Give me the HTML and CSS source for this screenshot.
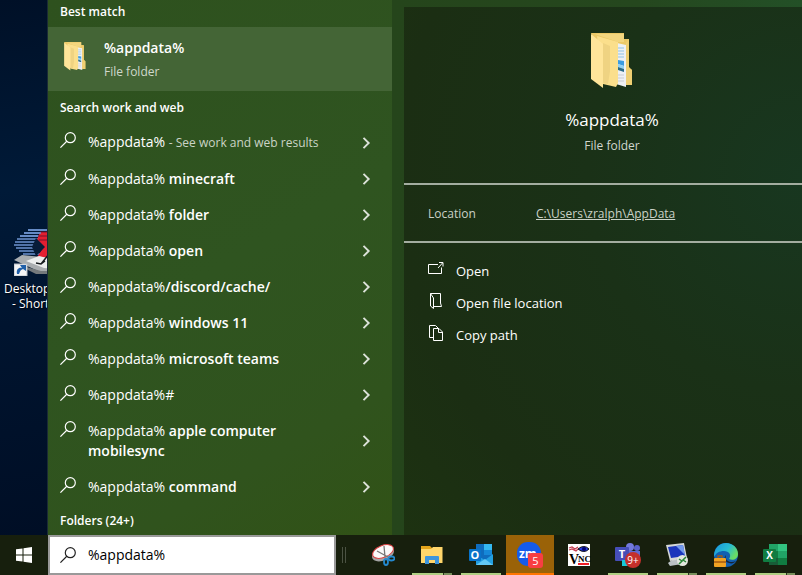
FILE: index.html
```html
<!DOCTYPE html>
<html lang="en">
<head>
    <meta charset="UTF-8">
    <meta name="viewport" content="width=device-width, initial-scale=1.0">
    <title>Windows Search</title>
    <link rel="stylesheet" href="styles.css">
</head>
<body>
    <!-- Shared icons -->
    <svg class="sprite" aria-hidden="true">
        <symbol id="icon-search" viewBox="0 0 16 16">
            <circle cx="10.3" cy="5.7" r="5" fill="none" stroke="currentColor" stroke-width="1.2"/>
            <path d="M6.8 9.3 L.4 15.6" fill="none" stroke="currentColor" stroke-width="1.2"/>
        </symbol>
        <symbol id="icon-chevron" viewBox="0 0 8 12">
            <path d="M1 .8 L6.2 6 L1 11.2" fill="none" stroke="currentColor" stroke-width="1.9"/>
        </symbol>
        <symbol id="icon-folder" viewBox="0 0 42 56">
            <path d="M0 0 H33 V6 H38 V34 L41 37 V52 H34 L12 49 Z" fill="#ecc967"/>
            <path d="M4 1 H33 V9 L27 9 Z" fill="#f3d67f"/>
            <path d="M26 10 L35 12 V54 L25 51 Z" fill="#eef0f3"/>
            <path d="M27 15 H33 M27 18 H33 M27 21 H33 M27 24 H33" stroke="#8fc3e6" stroke-width="1"/>
            <path d="M27 27 L33 28 V33 L27 31 Z" fill="#3b9be0"/>
            <path d="M27 31 L33 33 V36 L27 34 Z" fill="#8fd0f5"/>
            <path d="M27 34 L33 36 V39 L27 37 Z" fill="#286a86"/>
            <path d="M27 42 H33 M27 45 H33 M27 48 H33" stroke="#c9ccd2" stroke-width="1"/>
            <path d="M35 10 L38 6 V35 L41 37 V52 L35 52 Z" fill="#efcf72"/>
            <path d="M6 3 L27 9 V50 L25 54 L12 51 Z" fill="#fbdf8c"/>
            <path d="M12 10 L19 13 V38 L17 51 L12 50 Z" fill="#efd382"/>
            <path d="M0 1 L12 11 V55 L0 46 Z" fill="#ffe59a"/>
        </symbol>
    </svg>

    <div class="screen">
        <main class="workspace">
            <div class="desktop">
                <div class="shortcut">
                    <svg class="shortcut-icon" viewBox="0 0 48 48">
                        <path d="M14 2 H46 M10 5 H34 M6 8 H28 M3 11 H24 M1 14 H22 M0 17 H21 M2 20 H22 M5 23 H25 M9 26 H29" stroke="#6c93cf" stroke-width="1.7"/>
                        <path d="M26 4 H48 V34 H20 L29 20 L23 12 Z" fill="#e21f31"/>
                        <path d="M26 4 H48 M24 8 H48 M25 12 H48" stroke="#79132c"/>
                        <path d="M14 2 H46 M10 5 H27 M6 8 H24" stroke="#6c93cf" stroke-width="1.7"/>
                        <path d="M22 10 L31 19 L22 28 L18 19 Z" fill="#071c39"/>
                        <path d="M0 32 L8 27 L48 31 V46 L24 43 Z" fill="#a9adb0"/>
                        <path d="M12 33 L25 28 L48 34 V41 L30 40 Z" fill="#eceeee"/>
                        <path d="M2 36 L27 43 H48 V46 H22 Z" fill="#74797c"/>
                        <path d="M27 36 L35 26 M22 35 L27 36 L31 33" stroke="#15191d" stroke-width="1.5" fill="none"/>
                        <path d="M0 36 H13 V48 H0 Z" fill="#f4f5f6" stroke="#b8bec5"/>
                        <path d="M3 46 C2 41 5 39 8 40 L6 37 H12 V43 L9 41 C6 42 6 44 5 46 Z" fill="#205fa8"/>
                    </svg>
                    <span>Desktop</span>
                    <span class="second">- Short</span>
                </div>
            </div>

            <section class="results">
                <h2 class="best">Best match</h2>
                <button class="best-match">
                    <svg class="small-folder"><use href="#icon-folder"/></svg>
                    <span class="match-text">
                        <strong>%appdata%</strong>
                        <span>File folder</span>
                    </span>
                </button>
                <h2>Search work and web</h2>
                <div class="suggestions">
                    <button class="suggestion"><svg class="glass"><use href="#icon-search"/></svg><span class="label">%appdata% <small>- See work and web results</small></span><svg class="chevron"><use href="#icon-chevron"/></svg></button>
                    <button class="suggestion"><svg class="glass"><use href="#icon-search"/></svg><span class="label">%appdata% <b>minecraft</b></span><svg class="chevron"><use href="#icon-chevron"/></svg></button>
                    <button class="suggestion"><svg class="glass"><use href="#icon-search"/></svg><span class="label">%appdata% <b>folder</b></span><svg class="chevron"><use href="#icon-chevron"/></svg></button>
                    <button class="suggestion"><svg class="glass"><use href="#icon-search"/></svg><span class="label">%appdata% <b>open</b></span><svg class="chevron"><use href="#icon-chevron"/></svg></button>
                    <button class="suggestion"><svg class="glass"><use href="#icon-search"/></svg><span class="label">%appdata%<b>/discord/cache/</b></span><svg class="chevron"><use href="#icon-chevron"/></svg></button>
                    <button class="suggestion"><svg class="glass"><use href="#icon-search"/></svg><span class="label">%appdata% <b>windows 11</b></span><svg class="chevron"><use href="#icon-chevron"/></svg></button>
                    <button class="suggestion"><svg class="glass"><use href="#icon-search"/></svg><span class="label">%appdata% <b>microsoft teams</b></span><svg class="chevron"><use href="#icon-chevron"/></svg></button>
                    <button class="suggestion"><svg class="glass"><use href="#icon-search"/></svg><span class="label">%appdata%#</span><svg class="chevron"><use href="#icon-chevron"/></svg></button>
                    <button class="suggestion"><svg class="glass"><use href="#icon-search"/></svg><span class="label">%appdata% <b>apple computer mobilesync</b></span><svg class="chevron"><use href="#icon-chevron"/></svg></button>
                    <button class="suggestion"><svg class="glass"><use href="#icon-search"/></svg><span class="label">%appdata% <b>command</b></span><svg class="chevron"><use href="#icon-chevron"/></svg></button>
                </div>
                <h2 class="folders">Folders (24+)</h2>
            </section>

            <section class="preview-wrap">
                <div class="preview">
                    <header class="preview-head">
                        <svg class="large-folder"><use href="#icon-folder"/></svg>
                        <h1>%appdata%</h1>
                        <p>File folder</p>
                    </header>
                    <div class="location">
                        <span>Location</span>
                        <a href="#">C:\Users\zralph\AppData</a>
                    </div>
                    <div class="actions">
                        <button class="action">
                            <svg viewBox="0 0 16 16"><path d="M10 3.500 H.5 V12.500 H13.500 V6.500 M10 7 L14.500 2 M11 1.500 H15 V5.500" fill="none" stroke="currentColor"/></svg>
                            Open
                        </button>
                        <button class="action">
                            <svg viewBox="0 0 16 16"><path d="M2.500 .5 H12.500 V10 L13.500 13.500 H6 M2.500 .5 V13 L5.500 15.500 V5 L2.500 .5" fill="none" stroke="currentColor"/></svg>
                            Open file location
                        </button>
                        <button class="action">
                            <svg viewBox="0 0 16 16"><path d="M5 12.500 H1.500 V.5 H7.500 L10.500 3.500 M5.500 3.500 H11 L14.500 7 V15.500 H5.500 Z M10.500 3.500 V7.500 H14.500" fill="none" stroke="currentColor"/></svg>
                            Copy path
                        </button>
                    </div>
                </div>
            </section>
        </main>

        <footer class="taskbar">
            <button class="start" aria-label="Start">
                <svg viewBox="0 0 16 16"><path d="M0 2.300 L6.500 1.400 V7.500 H0 Z M7.500 1.200 L16 0 V7.500 H7.500 Z M0 8.500 H6.500 V14.600 L0 13.700 Z M7.500 8.500 H16 V16 L7.500 14.800 Z" fill="#fff"/></svg>
            </button>
            <label class="search-box">
                <svg class="glass"><use href="#icon-search"/></svg>
                <input type="text" value="%appdata%" aria-label="Search">
            </label>
            <div class="grip"></div>
            <nav class="apps">
                <button class="app" aria-label="Snipping Tool">
                    <svg viewBox="0 0 24 24">
                        <ellipse cx="12" cy="11" rx="11.500" ry="6.500" transform="rotate(-22 12 11)" fill="#a5a5a5"/>
                        <ellipse cx="12" cy="8.500" rx="11" ry="6" transform="rotate(-22 12 8.500)" fill="#fafafa" stroke="#d84343"/>
                        <path d="M13 3 L14 14 M6 8 L17 14" stroke="#777" stroke-width="1.300"/>
                        <g fill="none" stroke="#2489cf" stroke-width="1.800"><ellipse cx="15" cy="19" rx="2" ry="3"/><ellipse cx="20.500" cy="15.500" rx="3" ry="2"/></g>
                    </svg>
                </button>
                <button class="app open stacked" aria-label="File Explorer">
                    <svg viewBox="0 0 24 24">
                        <path d="M1 3 H10 L12 5 H22 V9 H1 Z" fill="#e4a41b"/>
                        <path d="M1 6 H11 L13 4 H22.500 V20 H1 Z" fill="#ffd66b"/>
                        <path d="M5 21 V14 Q5 13 6 13 H18 Q19 13 19 14 V21 H15 V17 H9 V21 Z" fill="#3d95dc"/>
                    </svg>
                </button>
                <button class="app open" aria-label="Outlook">
                    <svg viewBox="0 0 24 24">
                        <path d="M7 1 H23 V17 H7 Z" fill="#0f6cbd"/><path d="M15 1 H23 V7 H15 Z" fill="#35b8f1"/><path d="M15 7 H23 V12 H15 Z" fill="#1688d8"/>
                        <path d="M7 12 L16 17 L24 11 V22 H7 Z" fill="#239fe0"/><path d="M7 22 L16 16 L24 22 Z" fill="#62c8f4"/>
                        <rect y="6" width="12" height="12" rx="1" fill="#0873ca"/><text x="6" y="16" text-anchor="middle" font-size="11" font-weight="700">O</text>
                    </svg>
                </button>
                <button class="app alert" aria-label="Zoom">
                    <svg viewBox="0 0 26 26">
                        <rect x="0" y="0" width="24" height="24" rx="11" fill="#155bea"/><text x="2" y="16" font-size="12" font-weight="700">zm</text>
                        <rect x="11" y="11" width="15" height="15" rx="3" fill="#f83e42"/><text x="18.500" y="23" text-anchor="middle" font-size="11">5</text>
                    </svg>
                </button>
                <button class="app" aria-label="VNC Viewer">
                    <svg viewBox="0 0 24 24">
                        <rect x="1" y="1" width="22" height="22" fill="#fff"/>
                        <path d="M2 5 L5 4 L8 6 L11 4 M2 7 L5 6 L9 8 L11 6" fill="none" stroke="#c33c4f" stroke-width="1.200"/>
                        <path d="M11 6 Q17 1 22 6 Q17 11 11 6 Z" fill="#263de0" stroke="#090909"/><circle cx="17" cy="6" r="2" fill="#050571"/>
                        <text class="vnc" x="2" y="21" font-size="14" font-weight="700">V</text><text class="vnc" x="11" y="19" font-size="9" font-weight="700">NC</text>
                        <path d="M11 21 H22" stroke="#ef2027" stroke-width="2"/>
                    </svg>
                </button>
                <button class="app open" aria-label="Microsoft Teams">
                    <svg viewBox="0 0 26 26">
                        <circle cx="15" cy="5" r="4" fill="#7278dc"/><circle cx="22" cy="6" r="3" fill="#5961cb"/>
                        <path d="M9 9 H25 V17 Q22 24 15 23 H9 Z" fill="#606bd2"/>
                        <rect x="0" y="5" width="14" height="14" rx="1" fill="#464eb8"/><text x="7" y="16" text-anchor="middle" font-size="11" font-weight="700">T</text>
                        <path d="M7 18 H15 V24 H7 Z" fill="#16cadb"/>
                        <circle cx="18" cy="18" r="8" fill="#c5302b"/><text x="18" y="22" text-anchor="middle" font-size="10">9+</text>
                    </svg>
                </button>
                <button class="app open stacked" aria-label="Remote Desktop">
                    <svg viewBox="0 0 24 24">
                        <path d="M7 17 L14 16 L17 21 L5 23 L3 20 Z" fill="#bbc1c4"/>
                        <path d="M1 2 L19 0 L22 15 L5 18 Z" fill="#d4d7d7"/><path d="M3 4 L18 2 L20 13 L6 15 Z" fill="#1b36bc"/><path d="M11 3 L18 2 L20 12 Z" fill="#7299eb"/>
                        <circle cx="17.500" cy="17.500" r="5.500" fill="#e4e7df"/><path d="M14 16 L17 18 L14 21 M21 14 L18 17 L21 19" fill="none" stroke="#278334" stroke-width="1.500"/>
                    </svg>
                </button>
                <button class="app open" aria-label="Microsoft Edge">
                    <svg viewBox="0 0 24 24">
                        <defs><linearGradient id="edge" x2="1" y2=".5"><stop stop-color="#1995df"/><stop offset=".6" stop-color="#28bcd1"/><stop offset="1" stop-color="#69db64"/></linearGradient></defs>
                        <circle cx="12" cy="12" r="12" fill="#1260b1"/>
                        <path d="M0 12 C1 4 6 0 12 0 C19 0 24 5 24 11 C24 16 19 18 15 16 C18 12 15 8 10 8 C5 8 2 10 0 14 Z" fill="url(#edge)"/>
                        <path d="M12 12 C10 17 16 21 22 18 C20 20 18 21 15 20 C11 19 9 15 12 12 Z" fill="#17243a"/>
                        <rect x="0" y="15" width="12" height="9" rx="1" fill="#f1a323"/><path d="M4 15 V13 H8 V15 M0 19 H12" fill="none" stroke="#a35b12" stroke-width="1.300"/>
                    </svg>
                </button>
                <button class="app open stacked" aria-label="Excel">
                    <svg viewBox="0 0 24 24">
                        <path d="M6 1 H24 V22 H6 Z" fill="#21a366"/><path d="M15 1 H24 V8 H15 Z" fill="#33c481"/><path d="M6 8 H15 V15 H6 Z" fill="#107c41"/><path d="M6 15 H24 V22 H6 Z" fill="#185c37"/><path d="M15 15 H24 V22 H15 Z" fill="#107c41"/>
                        <rect y="6" width="13" height="13" rx="1" fill="#107c41"/><text x="6.500" y="16" text-anchor="middle" font-size="10" font-weight="700">X</text>
                    </svg>
                </button>
            </nav>
        </footer>
    </div>
</body>
</html>
```

FILE: styles.css
```css
* {
    box-sizing: border-box;
}

body {
    margin: 0;
    font-family: "Open Sans", "Noto Sans", sans-serif;
    font-size: 14px;
    line-height: 20px;
    color: #fff;
    background: #171f0d;
}

button {
    margin: 0;
    padding: 0;
    border: 0;
    background: none;
    color: inherit;
    font: inherit;
    text-align: left;
}

svg {
    display: block;
    flex: none;
}

h1, h2, p {
    margin: 0;
}

.sprite {
    position: absolute;
    width: 0;
    height: 0;
}

.screen {
    display: flex;
    flex-direction: column;
    min-height: 100vh;
}

.workspace {
    display: flex;
    flex: 1;
}

/* Desktop */
.desktop {
    width: 48px;
    overflow: hidden;
    padding: 228px 0 0 4px;
    border-right: 1px solid #1b2b35;
    background: linear-gradient(170deg, #001027, #001a38 35%, #00142f 60%, #000e25);
}

.shortcut {
    display: flex;
    flex-direction: column;
    width: 64px;
    font-size: 12px;
    line-height: 15px;
    text-shadow: 1px 1px 2px #000;
}

.shortcut-icon {
    width: 48px;
    height: 48px;
    margin: 0 0 5px 10px;
}

.shortcut .second {
    padding-left: 8px;
}

/* Results */
.results {
    width: 344px;
    background: linear-gradient(150deg, #2e511e, #2f5420 50%, #30531d 80%, #315216);
}

.results h2 {
    padding: 7px 12px 5px;
    font-size: 12px;
    line-height: 20px;
    font-weight: 600;
}

.results .best {
    padding: 2px 12px 5px;
}

.results .folders {
    padding-bottom: 4px;
}

.best-match {
    display: flex;
    width: 100%;
    height: 64px;
    padding: 11px 16px 9px;
    gap: 18px;
    background: #446536;
}

.small-folder {
    width: 22px;
    height: 29px;
    margin-top: 4px;
}

.match-text {
    display: flex;
    flex-direction: column;
    gap: 4px;
}

.match-text strong {
    font-weight: 600;
}

.match-text span {
    font-size: 12px;
    color: #d0d8cc;
}

.suggestion {
    display: flex;
    width: 100%;
    padding: 9px 21px 7px 12px;
    gap: 12px;
}

.label {
    flex: 1;
    padding-right: 60px;
}

.label:has(small) {
    padding-right: 0;
}

.label b {
    font-weight: 600;
}

.label small {
    font-size: 12px;
    color: #cbd4c6;
}

.glass {
    width: 16px;
    height: 16px;
}

.chevron {
    width: 9px;
    height: 12px;
    align-self: center;
    color: #dce2d9;
}

/* Preview */
.preview-wrap {
    display: flex;
    flex: 1;
    padding: 7px 0 0 12px;
    background: linear-gradient(90deg, #25451b, #25471e 60%, #235027);
}

.preview {
    flex: 1;
    background: radial-gradient(circle at 100% 32%, #183720, #1a3117 40%, #1b2e13 75%, #1d3211);
}

.preview-head {
    display: flex;
    flex-direction: column;
    align-items: center;
    padding: 26px 0 27px 18px;
    border-bottom: 2px solid #a3ada0;
}

.large-folder {
    width: 42px;
    height: 56px;
    margin-bottom: 19px;
}

.preview-head h1 {
    font-size: 17px;
    line-height: 24px;
    font-weight: 400;
    margin-bottom: 4px;
}

.preview-head p {
    font-size: 12px;
    color: #d0d6ce;
}

.location {
    display: flex;
    padding: 19px 24px 17px;
    border-bottom: 2px solid #a3ada0;
    font-size: 12px;
    color: #cad1c7;
}

.location span {
    width: 108px;
}

.location a {
    color: inherit;
}

.actions {
    padding: 12px 24px;
}

.action {
    display: flex;
    width: 100%;
    padding: 6px 0;
    gap: 12px;
    font-size: 13px;
}

.action svg {
    width: 16px;
    height: 16px;
}

/* Taskbar */
.taskbar {
    display: flex;
    height: 40px;
    background: #171f0d;
}

.start {
    display: flex;
    align-items: center;
    justify-content: center;
    width: 48px;
}

.start svg {
    width: 16px;
    height: 16px;
}

.search-box {
    display: flex;
    align-items: center;
    width: 288px;
    padding: 0 10px;
    gap: 12px;
    border: 2px solid #999;
    background: #fff;
    color: #222;
}

.search-box input {
    flex: 1;
    min-width: 0;
    padding: 0;
    border: 0;
    outline: 0;
    background: none;
    color: #000;
    font: inherit;
}

.grip {
    width: 4px;
    height: 16px;
    margin: 12px 13px 0 6px;
    border: 1px solid #4b5243;
    border-width: 0 1px;
}

.apps {
    display: flex;
    gap: 1px;
}

.app {
    position: relative;
    display: flex;
    align-items: center;
    justify-content: center;
    width: 48px;
}

.app svg {
    width: 24px;
    height: 24px;
}

.app text {
    fill: #fff;
}

.app .vnc {
    fill: #000;
    font-family: "Liberation Serif", serif;
}

.open::after,
.alert::after {
    content: "";
    position: absolute;
    left: 4px;
    right: 4px;
    bottom: 0;
    height: 2px;
    background: #afcf83;
}

.stacked::after {
    background: linear-gradient(90deg, #afcf83 31px, #26331b 31px, #26331b 32px, #78905c 32px);
}

.alert {
    background: #9a6208;
}

.alert::after {
    left: 0;
    right: 0;
    background: #ff7500;
}

.alert svg,
.app svg[viewBox="0 0 26 26"] {
    width: 26px;
    height: 26px;
}
```
